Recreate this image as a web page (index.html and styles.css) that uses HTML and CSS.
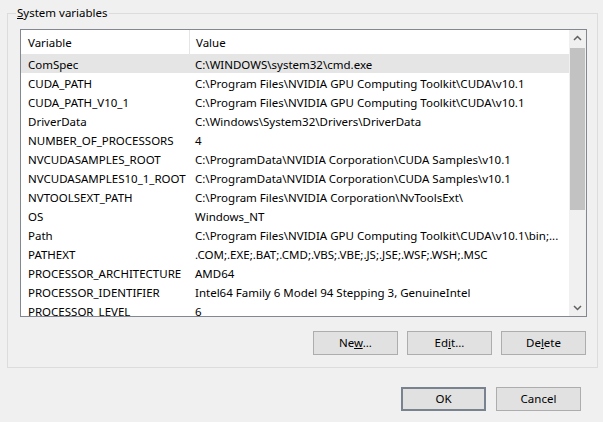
FILE: index.html
```html
<!DOCTYPE html>
<html>
<head>
<meta charset="utf-8">
<link rel="stylesheet" href="styles.css">
</head>
<body>
<div class="dialog">
  <div class="group">
    <div class="legend"><u>S</u>ystem variables</div>
    <div class="listbox">
      <div class="table">
        <div class="hdr">
          <div class="c1">Variable</div>
          <div class="c2">Value</div>
        </div>
        <div class="row sel"><div class="c1">ComSpec</div><div class="c2">C:\WINDOWS\system32\cmd.exe</div></div>
        <div class="row"><div class="c1">CUDA_PATH</div><div class="c2">C:\Program Files\NVIDIA GPU Computing Toolkit\CUDA\v10.1</div></div>
        <div class="row"><div class="c1">CUDA_PATH_V10_1</div><div class="c2">C:\Program Files\NVIDIA GPU Computing Toolkit\CUDA\v10.1</div></div>
        <div class="row"><div class="c1">DriverData</div><div class="c2">C:\Windows\System32\Drivers\DriverData</div></div>
        <div class="row"><div class="c1">NUMBER_OF_PROCESSORS</div><div class="c2">4</div></div>
        <div class="row"><div class="c1">NVCUDASAMPLES_ROOT</div><div class="c2">C:\ProgramData\NVIDIA Corporation\CUDA Samples\v10.1</div></div>
        <div class="row"><div class="c1">NVCUDASAMPLES10_1_ROOT</div><div class="c2">C:\ProgramData\NVIDIA Corporation\CUDA Samples\v10.1</div></div>
        <div class="row"><div class="c1">NVTOOLSEXT_PATH</div><div class="c2">C:\Program Files\NVIDIA Corporation\NvToolsExt\</div></div>
        <div class="row"><div class="c1">OS</div><div class="c2">Windows_NT</div></div>
        <div class="row"><div class="c1">Path</div><div class="c2">C:\Program Files\NVIDIA GPU Computing Toolkit\CUDA\v10.1\bin;...</div></div>
        <div class="row"><div class="c1">PATHEXT</div><div class="c2">.COM;.EXE;.BAT;.CMD;.VBS;.VBE;.JS;.JSE;.WSF;.WSH;.MSC</div></div>
        <div class="row"><div class="c1">PROCESSOR_ARCHITECTURE</div><div class="c2">AMD64</div></div>
        <div class="row"><div class="c1">PROCESSOR_IDENTIFIER</div><div class="c2">Intel64 Family 6 Model 94 Stepping 3, GenuineIntel</div></div>
        <div class="row"><div class="c1">PROCESSOR_LEVEL</div><div class="c2">6</div></div>
      </div>
      <div class="scrollbar">
        <div class="arrow"><svg width="17" height="17" viewBox="0 0 17 17"><polyline points="5,10 8.5,6.5 12,10" fill="none" stroke="#606060" stroke-width="1.5"/></svg></div>
        <div class="track"><div class="thumb"></div></div>
        <div class="arrow"><svg width="17" height="17" viewBox="0 0 17 17"><polyline points="5,7 8.5,10.5 12,7" fill="none" stroke="#606060" stroke-width="1.5"/></svg></div>
      </div>
    </div>
    <div class="btnrow">
      <div class="btn">Ne<u>w</u>...</div>
      <div class="btn">Ed<u>i</u>t...</div>
      <div class="btn">De<u>l</u>ete</div>
    </div>
  </div>
  <div class="footer">
    <div class="btn default">OK</div>
    <div class="btn">Cancel</div>
  </div>
</div>
</body>
</html>
```

FILE: styles.css
```css
html, body {
  margin: 0;
  padding: 0;
  background: #f0f0f0;
}
body {
  width: 603px;
  height: 422px;
  overflow: hidden;
  font-family: "Noto Sans", "Open Sans", sans-serif;
  font-size: 11.5px;
  color: #000;
}
.dialog {
  padding-top: 13px;
}
.group {
  margin-left: 7px;
  width: 589px;
  height: 353px;
  border: 1px solid #dcdcdc;
}
.legend {
  width: fit-content;
  margin: -9px 0 0 8px;
  padding: 0 1px;
  line-height: 16px;
  background: #f0f0f0;
}
.listbox {
  margin: 8px 0 0 12px;
  width: 565px;
  height: 286px;
  border: 1px solid #828790;
  background: #fff;
  display: flex;
  overflow: hidden;
}
.table {
  width: 548px;
  overflow: hidden;
}
.hdr, .row {
  display: flex;
  white-space: nowrap;
}
.hdr {
  height: 24px;
  align-items: center;
}
.hdr .c1 {
  border-right: 1px solid #e5e5e5;
}
.hdr .c1, .hdr .c2 {
  height: 24px;
  line-height: 26px;
}
.row {
  height: 18px;
  padding-top: 1px;
  line-height: 20px;
}
.row.sel {
  background: #e5e5e5;
}
.c1 {
  width: 161px;
  flex: none;
  padding-left: 7px;
}
.c2 {
  padding-left: 6px;
  flex: 1;
  overflow: hidden;
}
.scrollbar {
  width: 17px;
  flex: none;
  display: flex;
  flex-direction: column;
  background: #f0f0f0;
}
.arrow {
  height: 17px;
  flex: none;
}
.arrow svg {
  display: block;
}
.track {
  flex: 1;
  padding: 1px 1px 0 1px;
}
.thumb {
  height: 162px;
  background: #c2c2c2;
}
.btnrow {
  display: flex;
  justify-content: flex-end;
  gap: 9px;
  margin: 14px 11px 0 0;
}
.btn {
  width: 83px;
  height: 22px;
  line-height: 22px;
  text-align: center;
  background: #e1e1e1;
  border: 1px solid #adadad;
}
.footer {
  display: flex;
  justify-content: flex-end;
  gap: 10px;
  margin: 19px 22px 0 0;
}
.footer .btn.default {
  width: 81px;
  height: 20px;
  line-height: 20px;
  border: 2px solid #78838f;
}
```
